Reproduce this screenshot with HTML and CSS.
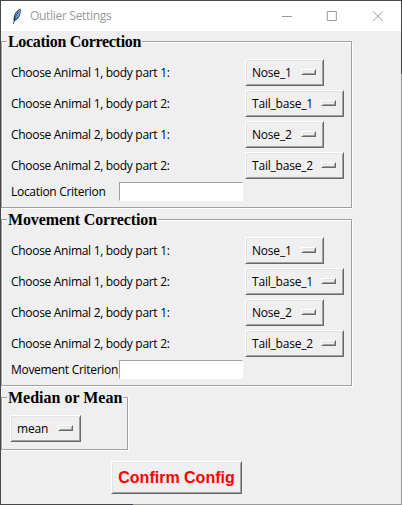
FILE: index.html
```html
<!DOCTYPE html>
<html lang="en">
<head>
<meta charset="utf-8">
<title>Outlier Settings</title>
<link rel="stylesheet" href="styles.css">
</head>
<body>
<main class="window">
  <header class="titlebar">
    <svg class="feather" width="12" height="18" viewBox="0 0 12 18">
      <path d="M3 14.500C1.500 11 4 3.500 9.500 1.500C10.500 6 8.500 11.500 4.500 13.500Z" fill="#23384f"/>
      <path d="M3.600 11.500C4 7.500 6 4.500 9 2.500C9.600 5.500 8 9.500 5 12Z" fill="#6eb0ee"/>
      <path d="M2.500 17C3.300 12 5 8 8 4.500" fill="none" stroke="#1c3046" stroke-width=".8"/>
    </svg>
    <h1 class="title">Outlier Settings</h1>
    <svg class="controls" width="120" height="12" viewBox="0 0 120 12" fill="none" stroke="#999">
      <path d="M1 5.5H11M46.5 .5H55.5V9.5H46.5Z"/>
      <path d="M92.500 .5L102 10M102 .5L92.500 10"/>
    </svg>
  </header>

  <section class="group">
    <h2 class="legend location-title">Location Correction</h2>
    <div class="row"><span class="label">Choose Animal 1, body part 1:</span><button class="option nose">Nose_1<i class="mark"></i></button></div>
    <div class="row"><span class="label">Choose Animal 1, body part 2:</span><button class="option tail">Tail_base_1<i class="mark"></i></button></div>
    <div class="row"><span class="label">Choose Animal 2, body part 1:</span><button class="option nose">Nose_2<i class="mark"></i></button></div>
    <div class="row"><span class="label">Choose Animal 2, body part 2:</span><button class="option tail">Tail_base_2<i class="mark"></i></button></div>
    <div class="row criterion"><label class="label" for="loc">Location Criterion</label><input class="entry" id="loc"></div>
  </section>

  <section class="group">
    <h2 class="legend movement-title">Movement Correction</h2>
    <div class="row"><span class="label">Choose Animal 1, body part 1:</span><button class="option nose">Nose_1<i class="mark"></i></button></div>
    <div class="row"><span class="label">Choose Animal 1, body part 2:</span><button class="option tail">Tail_base_1<i class="mark"></i></button></div>
    <div class="row"><span class="label">Choose Animal 2, body part 1:</span><button class="option nose">Nose_2<i class="mark"></i></button></div>
    <div class="row"><span class="label">Choose Animal 2, body part 2:</span><button class="option tail">Tail_base_2<i class="mark"></i></button></div>
    <div class="row criterion"><label class="label" for="mov">Movement Criterion</label><input class="entry" id="mov"></div>
  </section>

  <section class="group average">
    <h2 class="legend">Median or Mean</h2>
    <button class="option mean">mean<i class="mark"></i></button>
  </section>

  <button class="confirm">Confirm Config</button>
</main>
</body>
</html>
```
FILE: styles.css
```css
* { box-sizing: border-box; }

body {
  margin: 0;
  width: 402px;
  height: 505px;
  padding: 1px;
  overflow: hidden;
  background:
    linear-gradient(90deg, #47464b 133px, #999 133px) 0 504px / 402px 1px no-repeat,
    linear-gradient(#44474c 74px, #999 74px) 401px 0 / 1px 505px no-repeat,
    #47484d;
  font-family: "Open Sans", "Noto Sans", sans-serif;
  font-size: 12px;
  color: #000;
}

.window {
  width: 400px;
  height: 503px;
  background: #efefef;
}

.titlebar {
  display: flex;
  align-items: center;
  height: 30px;
  padding-left: 10px;
  background: #fff;
}

.feather {
  margin-right: 7px;
}

.title {
  width: 252px;
  margin: 0;
  font-size: 12px;
  font-weight: 400;
  line-height: 16px;
  letter-spacing: -0.3px;
  color: #999;
  white-space: nowrap;
}

.controls { margin-top: 1px; }

.group {
  width: 351px;
  height: 167px;
  margin: 10px 0 11px;
  padding-left: 9px;
  border: 1px solid #a0a0a0;
  box-shadow: 1px 1px 0 #fff, inset 1px 1px 0 #fff;
}

.legend {
  width: max-content;
  height: 18px;
  margin: -9px 0 8px -4px;
  padding: 0 1px;
  background: #efefef;
  font: bold 16px/18px "Liberation Serif", serif;
  white-space: nowrap;
}

.location-title { letter-spacing: -0.3px; }
.movement-title { letter-spacing: -0.12px; }

.row {
  display: flex;
  align-items: center;
  height: 27px;
  margin-bottom: 4px;
}

.label {
  width: 234px;
  line-height: 16px;
  letter-spacing: -0.3px;
  white-space: nowrap;
}

.criterion { height: 19px; margin: -1px 0 0; }
.criterion .label { width: 108px; }

.entry {
  width: 124px;
  height: 19px;
  padding: 0 2px;
  border: 1px solid;
  border-color: #a0a0a0 #fff #fff #a0a0a0;
  border-radius: 0;
  outline: none;
  background: #fff;
}

.option, .confirm {
  border: 1px solid;
  border-color: #fff #696969 #696969 #fff;
  border-radius: 0;
  background: #efefef;
  box-shadow: inset 1px 1px 0 #e3e3e3, inset -1px -1px 0 #a0a0a0;
  white-space: nowrap;
}

.option {
  display: flex;
  align-items: center;
  justify-content: space-between;
  height: 27px;
  padding: 0 7px 0 6px;
  font: 12px/16px "Open Sans", "Noto Sans", sans-serif;
  letter-spacing: -0.2px;
  color: #000;
}

.nose { width: 79px; }
.tail { width: 99px; }
.mean { width: 71px; }

.mark {
  width: 15px;
  height: 6px;
  margin-bottom: 1px;
  border: 1px solid;
  border-color: #fff #696969 #696969 #fff;
  box-shadow: inset 1px 1px 0 #e3e3e3, inset -1px -1px 0 #a0a0a0;
}

.average {
  width: 127px;
  height: 53px;
  padding-left: 8px;
}

.average .legend { margin-left: -3px; }

.confirm {
  display: block;
  width: 131px;
  height: 33px;
  margin-left: 110px;
  padding: 0;
  color: #f00;
  font: bold 16px/18px "Liberation Sans", sans-serif;
}
```
